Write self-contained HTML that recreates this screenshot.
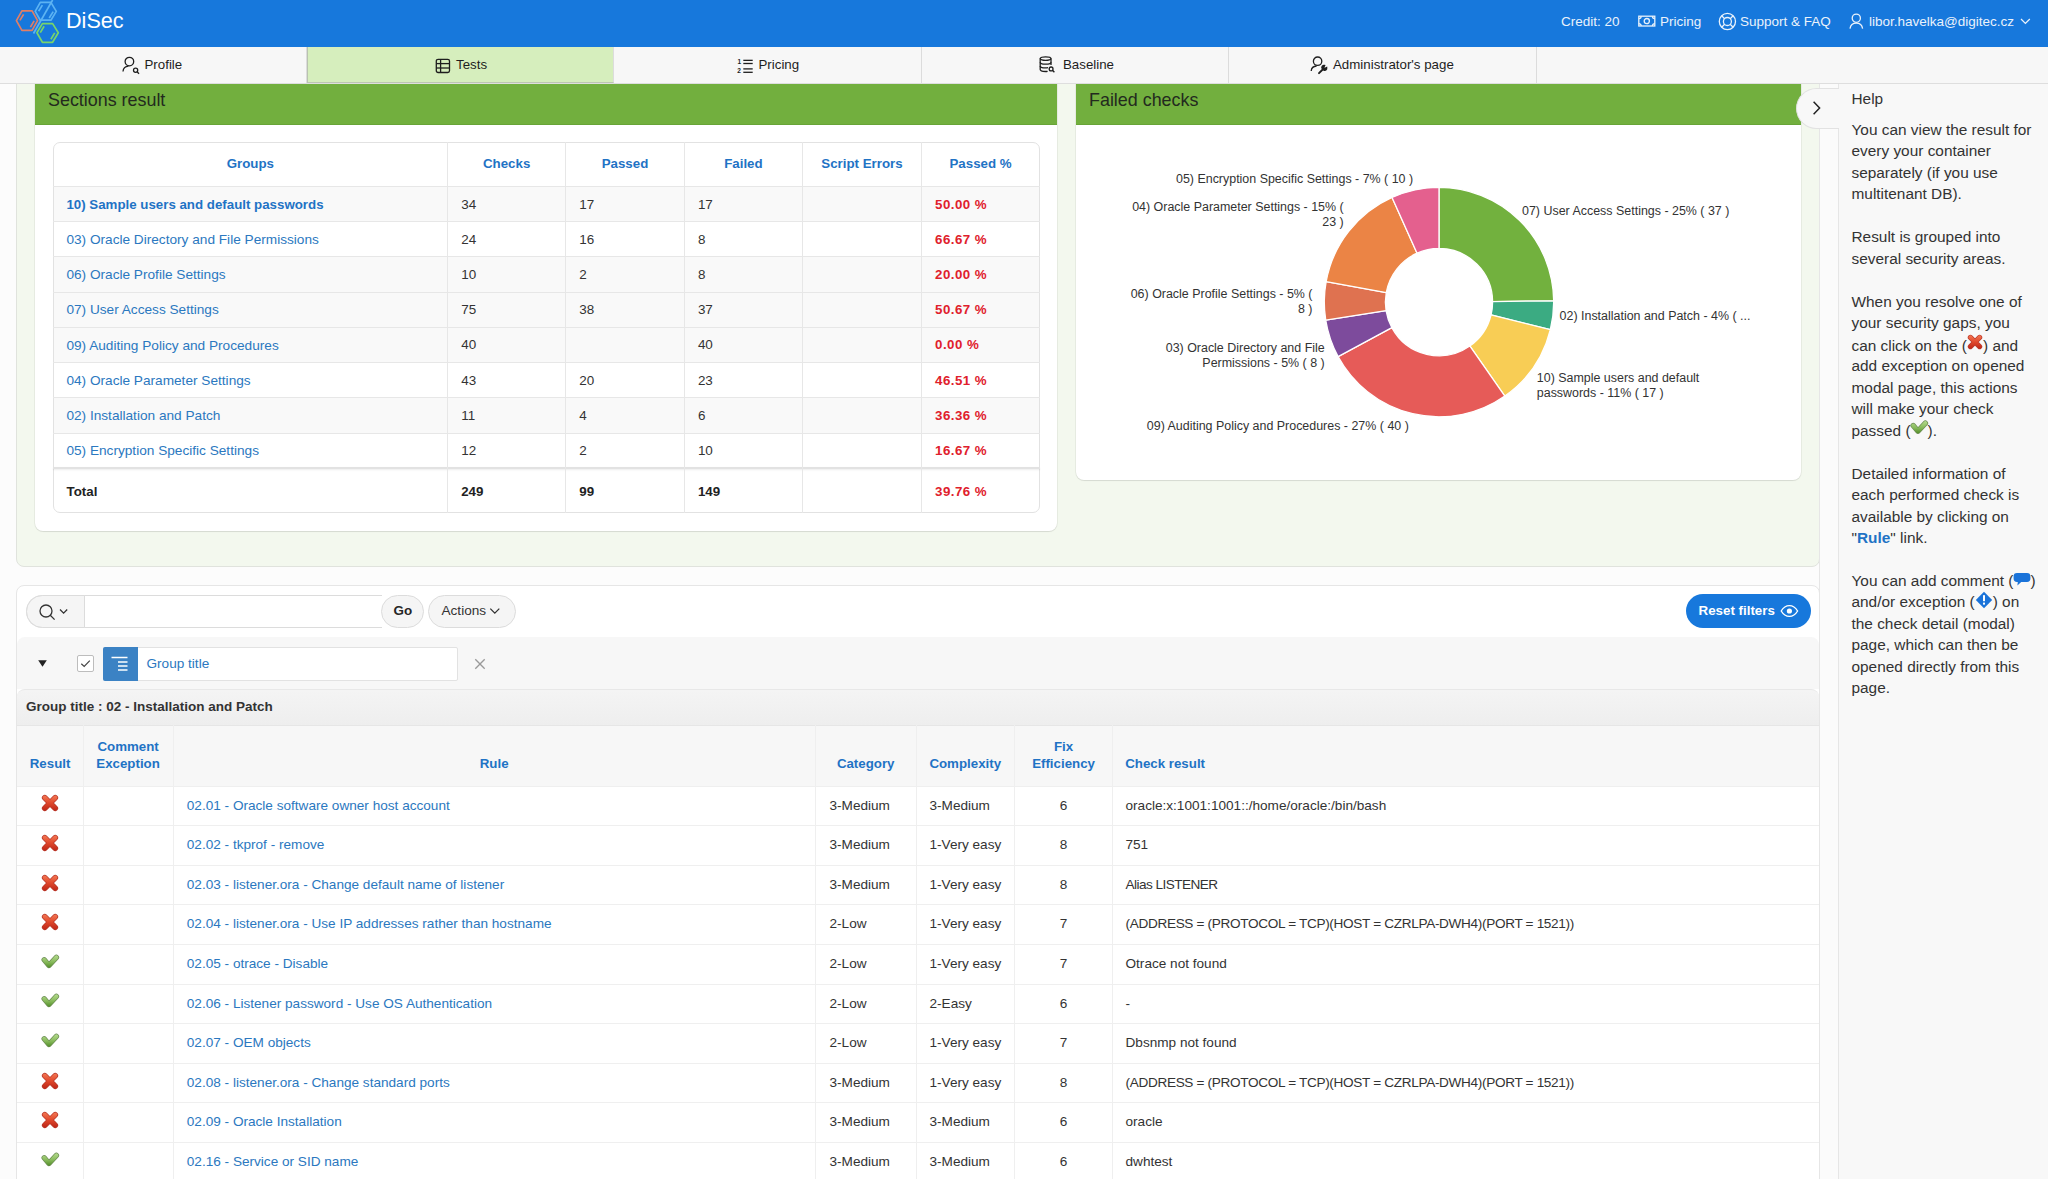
<!DOCTYPE html><html><head><meta charset="utf-8"><style>
*{box-sizing:border-box;margin:0;padding:0}
html,body{width:2048px;height:1179px;overflow:hidden;background:#fcfcfc;font-family:"Liberation Sans",sans-serif;color:#333}
.a{position:absolute}
.nw{white-space:nowrap}
#hdr{left:0;top:0;width:2048px;height:47px;background:#1778dc}
.ht{position:absolute;color:#eaf2fb;font-size:13.5px;top:14px;white-space:nowrap;line-height:16px}
#nav{left:0;top:47px;width:2048px;height:37px;background:#f7f7f7;border-bottom:1px solid #dedede}
.tab{position:absolute;top:0;height:36px;border-right:1px solid #dcdcdc}
.tt{position:absolute;top:10px;font-size:13.3px;color:#1e1e1e;white-space:nowrap;line-height:16px}
.ico{position:absolute;overflow:visible}
.gc{background:#f3f8ee;border:1px solid #e0e3dd}
.card{background:#fff;border-radius:0 0 8px 8px;box-shadow:0 1px 1px rgba(0,0,0,.08),0 0 0 1px rgba(0,0,0,.045)}
.ghd{background:#72af3e;border-bottom:1px solid #68a437}
.ghd span{position:absolute;left:13px;top:5.6px;font-size:17.9px;color:#232a1e;white-space:nowrap;line-height:20px}
.st{font-size:13.45px;line-height:16px;white-space:nowrap;position:absolute}
.lnk{color:#2b78c0}
.hb{color:#1f73c5;font-weight:bold;font-size:13.3px}
.pct{color:#e0202c;font-weight:bold;font-size:13.3px;letter-spacing:0.45px}
.vl{background:#e7e7e7;width:1px;position:absolute}
.hl{background:#e7e7e7;height:1px;position:absolute}
.lbl{position:absolute;font-size:12.45px;color:#333;white-space:nowrap;line-height:15px}
#help{left:1838px;top:84px;width:210px;height:1095px;background:#f8f8f8;border-left:1px solid #e6e6e6}
.hp{position:absolute;left:13px;font-size:15.4px;line-height:21.45px;color:#333;white-space:nowrap}
</style></head><body>
<div id="hdr" class="a">
<svg class="ico" style="left:0;top:0" width="64" height="47" viewBox="0 0 64 47"><g fill="none" stroke-width="1.7" stroke-linejoin="round">
<polygon points="16.4,20.6 21.9,10.9 32.1,10.9 37.6,20.6 32.1,30.4 21.9,30.4" stroke="#e07f66"/>
<line x1="19.9" y1="20.4" x2="23.6" y2="14.4" stroke="#e07f66"/><line x1="30.4" y1="27.1" x2="34.1" y2="20.9" stroke="#e07f66"/>
<polygon points="35.2,11.4 40.3,2.4 50.9,2.4 56.3,11.4 50.9,20.2 40.3,20.2" stroke="#5cb3f3"/>
<line x1="38.6" y1="11.2" x2="42.4" y2="5.1" stroke="#5cb3f3"/><line x1="49.2" y1="18.0" x2="53.2" y2="11.6" stroke="#5cb3f3"/>
<line x1="33.5" y1="33.5" x2="52.6" y2="0" stroke="#5cb3f3"/>
<polygon points="36.9,32.8 42.4,23.6 52.6,23.6 58.3,32.8 52.6,42.3 42.4,42.3" stroke="#78d46c"/>
<line x1="40.3" y1="32.6" x2="44.1" y2="26.3" stroke="#78d46c"/><line x1="50.9" y1="39.2" x2="54.7" y2="32.9" stroke="#78d46c"/>
</g></svg>
<div class="ht" style="left:66px;top:9px;font-size:21.6px;line-height:24px;color:#fff">DiSec</div>
<div class="ht" style="left:1561px">Credit: 20</div>
<svg class="ico" style="left:1638px;top:15px" width="18" height="12" viewBox="0 0 18 12"><g fill="none" stroke="#eaf2fb" stroke-width="1.3">
<rect x="0.8" y="1.2" width="16" height="9.8"/><circle cx="8.8" cy="6.1" r="2.6"/>
<path d="M0.8,3.6 A2.4,2.4 0 0 0 3.2,1.2 M14.4,1.2 A2.4,2.4 0 0 0 16.8,3.6 M0.8,8.6 A2.4,2.4 0 0 1 3.2,11 M14.4,11 A2.4,2.4 0 0 1 16.8,8.6"/></g></svg>
<div class="ht" style="left:1660px">Pricing</div>
<svg class="ico" style="left:1718px;top:12px" width="19" height="19" viewBox="0 0 19 19"><g fill="none" stroke="#eaf2fb" stroke-width="1.3">
<circle cx="9.4" cy="9.5" r="8.1"/><circle cx="9.4" cy="9.5" r="4"/>
<line x1="3.7" y1="3.8" x2="6.6" y2="6.7"/><line x1="15.1" y1="3.8" x2="12.2" y2="6.7"/><line x1="3.7" y1="15.2" x2="6.6" y2="12.3"/><line x1="15.1" y1="15.2" x2="12.2" y2="12.3"/></g></svg>
<div class="ht" style="left:1740px">Support &amp; FAQ</div>
<svg class="ico" style="left:1849px;top:13px" width="15" height="17" viewBox="0 0 15 17"><g fill="none" stroke="#eaf2fb" stroke-width="1.3">
<circle cx="7.3" cy="5.2" r="4.1"/><path d="M1,15.6 C1.6,11.8 4,10.2 7.3,10.2 C10.6,10.2 13,11.8 13.6,15.6"/></g></svg>
<div class="ht" style="left:1869px">libor.havelka@digitec.cz</div>
<svg class="ico" style="left:2020px;top:18px" width="11" height="7" viewBox="0 0 11 7"><path d="M1,1 L5.4,5.4 L9.8,1" fill="none" stroke="#eaf2fb" stroke-width="1.3"/></svg>
</div>
<div id="nav" class="a">
<div class="tab" style="left:0;width:307px"></div>
<div class="tab" style="left:307px;width:307px;background:#d6eebd;border-left:1px solid #b9c2b0;border-bottom:1px solid #bcc6b2;height:36px"></div>
<div class="tab" style="left:614px;width:308px"></div>
<div class="tab" style="left:922px;width:307px"></div>
<div class="tab" style="left:1229px;width:308px"></div>
<div class="tt" style="left:144.5px">Profile</div>
<div class="tt" style="left:456px">Tests</div>
<div class="tt" style="left:758.5px">Pricing</div>
<div class="tt" style="left:1063px">Baseline</div>
<div class="tt" style="left:1333px">Administrator's page</div>
<svg class="ico" style="left:121px;top:9px" width="20" height="19" viewBox="0 0 20 19"><g fill="none" stroke="#1e1e1e" stroke-width="1.3">
<circle cx="8.4" cy="5.6" r="4.3"/><path d="M2,15.5 C2.2,12.5 4.6,10.4 7.5,10.2"/><circle cx="14.6" cy="14.3" r="2.1"/><line x1="16.1" y1="15.8" x2="18" y2="17.8"/></g></svg>
<svg class="ico" style="left:435px;top:11px" width="16" height="16" viewBox="0 0 16 16"><g fill="none" stroke="#1e1e1e" stroke-width="1.3">
<rect x="1.3" y="1.3" width="13.2" height="13.2" rx="1.8"/><line x1="1.3" y1="5.6" x2="14.5" y2="5.6"/><line x1="1.3" y1="10" x2="14.5" y2="10"/><line x1="5.6" y1="1.3" x2="5.6" y2="14.5"/></g></svg>
<svg class="ico" style="left:737px;top:10px" width="18" height="17" viewBox="0 0 18 17"><g fill="none" stroke="#1e1e1e" stroke-width="1.3">
<line x1="6.3" y1="3.35" x2="15.7" y2="3.35"/><line x1="6.3" y1="6.5" x2="15.7" y2="6.5"/><line x1="6.3" y1="11.9" x2="15.7" y2="11.9"/><line x1="6.3" y1="15.3" x2="15.7" y2="15.3"/>
</g><text x="0.5" y="6.5" font-size="6.5" font-family="Liberation Sans" fill="#1e1e1e" font-weight="bold">1</text><text x="0.3" y="15.5" font-size="6.5" font-family="Liberation Sans" fill="#1e1e1e" font-weight="bold">2</text></svg>
<svg class="ico" style="left:1039px;top:9px" width="18" height="18" viewBox="0 0 18 18"><g fill="none" stroke="#1e1e1e" stroke-width="1.3">
<ellipse cx="6.6" cy="2.6" rx="5.4" ry="1.8"/><path d="M1.2,2.6 V13.6 C1.2,14.8 3.6,15.5 6.6,15.5 C7.4,15.5 8,15.4 8.6,15.3"/><path d="M12,2.6 V9"/>
<path d="M1.2,6.3 C1.2,7.5 3.6,8.2 6.6,8.2 C9.6,8.2 12,7.5 12,6.3"/><path d="M1.2,10 C1.2,11.2 3.6,11.9 6.6,11.9 C7.6,11.9 8.4,11.8 9,11.7"/>
<circle cx="12.1" cy="12.9" r="1.9"/><line x1="13.5" y1="14.3" x2="15.4" y2="16.3"/></g></svg>
<svg class="ico" style="left:1310px;top:9px" width="20" height="19" viewBox="0 0 20 19"><g fill="none" stroke="#1e1e1e" stroke-width="1.3">
<circle cx="7.6" cy="5.2" r="4.2"/><path d="M1.2,15 C1.4,12.2 3.8,10.2 6.6,10"/></g>
<path d="M9,17.2 L13.2,13 M12.2,12 C11.8,10.6 12.8,9.6 14.2,9.8 L13.4,11.6 L14.6,12.8 L16.4,12 C16.6,13.4 15.6,14.4 14.2,14" fill="none" stroke="#1e1e1e" stroke-width="1.9" stroke-linecap="round"/></svg>
</div>
<div class="a" style="left:0;top:84px;width:2048px;height:1095px;overflow:hidden"><div class="a" style="left:0;top:-84px;width:2048px;height:1179px">
<div class="a gc" style="left:16px;top:40px;width:1804px;height:527px;border-radius:8px"></div>
<div class="a card" style="left:35px;top:60px;width:1022px;height:471px"></div>
<div class="a ghd" style="left:35px;top:84px;width:1022px;height:41px"><span>Sections result</span></div>
<div class="a card" style="left:1076px;top:60px;width:725px;height:420px"></div>
<div class="a ghd" style="left:1076px;top:84px;width:725px;height:41px"><span>Failed checks</span></div>
<div class="a" style="left:53px;top:142.3px;width:987px;height:370.7px;background:#fff;border:1px solid #e2e2e2;border-radius:7px"></div>
<div class="a" style="left:54px;top:186.5px;width:985px;height:35.22px;background:#f9f9f9"></div>
<div class="a" style="left:54px;top:256.94px;width:985px;height:35.22px;background:#f9f9f9"></div>
<div class="a" style="left:54px;top:292.15999999999997px;width:985px;height:35.22px;background:#f9f9f9"></div>
<div class="a" style="left:54px;top:327.38px;width:985px;height:35.22px;background:#f9f9f9"></div>
<div class="a" style="left:54px;top:397.82px;width:985px;height:35.22px;background:#f9f9f9"></div>
<div class="hl" style="left:53px;top:186.0px;width:987px"></div>
<div class="hl" style="left:53px;top:221.22px;width:987px"></div>
<div class="hl" style="left:53px;top:256.44px;width:987px"></div>
<div class="hl" style="left:53px;top:291.65999999999997px;width:987px"></div>
<div class="hl" style="left:53px;top:326.88px;width:987px"></div>
<div class="hl" style="left:53px;top:362.1px;width:987px"></div>
<div class="hl" style="left:53px;top:397.32px;width:987px"></div>
<div class="hl" style="left:53px;top:432.53999999999996px;width:987px"></div>
<div class="a" style="left:53px;top:467.26px;width:987px;height:2px;background:#e2e2e2;box-shadow:0 1px 2px rgba(0,0,0,.08)"></div>
<div class="vl" style="left:447.1px;top:142.3px;height:370.7px"></div>
<div class="vl" style="left:565.2px;top:142.3px;height:370.7px"></div>
<div class="vl" style="left:683.8px;top:142.3px;height:370.7px"></div>
<div class="vl" style="left:802.0px;top:142.3px;height:370.7px"></div>
<div class="vl" style="left:921.0px;top:142.3px;height:370.7px"></div>
<div class="st hb" style="left:53px;width:394.6px;top:142.3px;height:44.19999999999999px;line-height:44.19999999999999px;text-align:center">Groups</div>
<div class="st hb" style="left:447.6px;width:118.10000000000002px;top:142.3px;height:44.19999999999999px;line-height:44.19999999999999px;text-align:center">Checks</div>
<div class="st hb" style="left:565.7px;width:118.59999999999991px;top:142.3px;height:44.19999999999999px;line-height:44.19999999999999px;text-align:center">Passed</div>
<div class="st hb" style="left:684.3px;width:118.20000000000005px;top:142.3px;height:44.19999999999999px;line-height:44.19999999999999px;text-align:center">Failed</div>
<div class="st hb" style="left:802.5px;width:119.0px;top:142.3px;height:44.19999999999999px;line-height:44.19999999999999px;text-align:center">Script Errors</div>
<div class="st hb" style="left:921.5px;width:118.09999999999991px;top:142.3px;height:44.19999999999999px;line-height:44.19999999999999px;text-align:center">Passed %</div>
<div class="st lnk" style="left:66.39999999999999px;top:186.8px;line-height:35.22px;font-size:13.65px;font-weight:bold;font-size:13.3px;color:#1f73c5">10) Sample users and default passwords</div>
<div class="st" style="left:461.20000000000005px;top:186.5px;line-height:35.22px">34</div>
<div class="st" style="left:579.3000000000001px;top:186.5px;line-height:35.22px">17</div>
<div class="st" style="left:697.9px;top:186.5px;line-height:35.22px">17</div>
<div class="st pct" style="left:935.1px;top:186.5px;line-height:35.22px">50.00 %</div>
<div class="st lnk" style="left:66.39999999999999px;top:222.02px;line-height:35.22px;font-size:13.65px;">03) Oracle Directory and File Permissions</div>
<div class="st" style="left:461.20000000000005px;top:221.72px;line-height:35.22px">24</div>
<div class="st" style="left:579.3000000000001px;top:221.72px;line-height:35.22px">16</div>
<div class="st" style="left:697.9px;top:221.72px;line-height:35.22px">8</div>
<div class="st pct" style="left:935.1px;top:221.72px;line-height:35.22px">66.67 %</div>
<div class="st lnk" style="left:66.39999999999999px;top:257.24px;line-height:35.22px;font-size:13.65px;">06) Oracle Profile Settings</div>
<div class="st" style="left:461.20000000000005px;top:256.94px;line-height:35.22px">10</div>
<div class="st" style="left:579.3000000000001px;top:256.94px;line-height:35.22px">2</div>
<div class="st" style="left:697.9px;top:256.94px;line-height:35.22px">8</div>
<div class="st pct" style="left:935.1px;top:256.94px;line-height:35.22px">20.00 %</div>
<div class="st lnk" style="left:66.39999999999999px;top:292.46px;line-height:35.22px;font-size:13.65px;">07) User Access Settings</div>
<div class="st" style="left:461.20000000000005px;top:292.15999999999997px;line-height:35.22px">75</div>
<div class="st" style="left:579.3000000000001px;top:292.15999999999997px;line-height:35.22px">38</div>
<div class="st" style="left:697.9px;top:292.15999999999997px;line-height:35.22px">37</div>
<div class="st pct" style="left:935.1px;top:292.15999999999997px;line-height:35.22px">50.67 %</div>
<div class="st lnk" style="left:66.39999999999999px;top:327.68px;line-height:35.22px;font-size:13.65px;">09) Auditing Policy and Procedures</div>
<div class="st" style="left:461.20000000000005px;top:327.38px;line-height:35.22px">40</div>
<div class="st" style="left:697.9px;top:327.38px;line-height:35.22px">40</div>
<div class="st pct" style="left:935.1px;top:327.38px;line-height:35.22px">0.00 %</div>
<div class="st lnk" style="left:66.39999999999999px;top:362.90000000000003px;line-height:35.22px;font-size:13.65px;">04) Oracle Parameter Settings</div>
<div class="st" style="left:461.20000000000005px;top:362.6px;line-height:35.22px">43</div>
<div class="st" style="left:579.3000000000001px;top:362.6px;line-height:35.22px">20</div>
<div class="st" style="left:697.9px;top:362.6px;line-height:35.22px">23</div>
<div class="st pct" style="left:935.1px;top:362.6px;line-height:35.22px">46.51 %</div>
<div class="st lnk" style="left:66.39999999999999px;top:398.12px;line-height:35.22px;font-size:13.65px;">02) Installation and Patch</div>
<div class="st" style="left:461.20000000000005px;top:397.82px;line-height:35.22px">11</div>
<div class="st" style="left:579.3000000000001px;top:397.82px;line-height:35.22px">4</div>
<div class="st" style="left:697.9px;top:397.82px;line-height:35.22px">6</div>
<div class="st pct" style="left:935.1px;top:397.82px;line-height:35.22px">36.36 %</div>
<div class="st lnk" style="left:66.39999999999999px;top:433.34px;line-height:35.22px;font-size:13.65px;">05) Encryption Specific Settings</div>
<div class="st" style="left:461.20000000000005px;top:433.03999999999996px;line-height:35.22px">12</div>
<div class="st" style="left:579.3000000000001px;top:433.03999999999996px;line-height:35.22px">2</div>
<div class="st" style="left:697.9px;top:433.03999999999996px;line-height:35.22px">10</div>
<div class="st pct" style="left:935.1px;top:433.03999999999996px;line-height:35.22px">16.67 %</div>
<div class="st " style="left:66.6px;top:470.06px;line-height:44.74000000000001px;color:#222;font-weight:bold;font-size:13.3px">Total</div>
<div class="st " style="left:461.20000000000005px;top:470.06px;line-height:44.74000000000001px;color:#222;font-weight:bold;font-size:13.3px">249</div>
<div class="st " style="left:579.3000000000001px;top:470.06px;line-height:44.74000000000001px;color:#222;font-weight:bold;font-size:13.3px">99</div>
<div class="st " style="left:697.9px;top:470.06px;line-height:44.74000000000001px;color:#222;font-weight:bold;font-size:13.3px">149</div>
<div class="st pct" style="left:935.1px;top:470.06px;line-height:44.74000000000001px;">39.76 %</div>
<svg class="a" style="left:0;top:0" width="2048" height="1179" viewBox="0 0 2048 1179"><path d="M1439.00,187.40 A114.7,114.7 0 0 1 1553.69,300.89 L1492.60,301.53 A53.6,53.6 0 0 0 1439.00,248.50 Z" fill="#72b13e" stroke="#fff" stroke-width="1.3" stroke-linejoin="round"/><path d="M1553.69,300.89 A114.7,114.7 0 0 1 1550.34,329.64 L1491.03,314.97 A53.6,53.6 0 0 0 1492.60,301.53 Z" fill="#3bab82" stroke="#fff" stroke-width="1.3" stroke-linejoin="round"/><path d="M1550.34,329.64 A114.7,114.7 0 0 1 1504.84,396.02 L1469.77,345.99 A53.6,53.6 0 0 0 1491.03,314.97 Z" fill="#f8cd55" stroke="#fff" stroke-width="1.3" stroke-linejoin="round"/><path d="M1504.84,396.02 A114.7,114.7 0 0 1 1338.09,356.64 L1391.85,327.58 A53.6,53.6 0 0 0 1469.77,345.99 Z" fill="#e65b58" stroke="#fff" stroke-width="1.3" stroke-linejoin="round"/><path d="M1338.09,356.64 A114.7,114.7 0 0 1 1325.73,320.16 L1386.07,310.54 A53.6,53.6 0 0 0 1391.85,327.58 Z" fill="#7d4b9c" stroke="#fff" stroke-width="1.3" stroke-linejoin="round"/><path d="M1325.73,320.16 A114.7,114.7 0 0 1 1326.14,281.65 L1386.26,292.55 A53.6,53.6 0 0 0 1386.07,310.54 Z" fill="#df7250" stroke="#fff" stroke-width="1.3" stroke-linejoin="round"/><path d="M1326.14,281.65 A114.7,114.7 0 0 1 1392.05,197.45 L1417.06,253.20 A53.6,53.6 0 0 0 1386.26,292.55 Z" fill="#eb8445" stroke="#fff" stroke-width="1.3" stroke-linejoin="round"/><path d="M1392.05,197.45 A114.7,114.7 0 0 1 1439.00,187.40 L1439.00,248.50 A53.6,53.6 0 0 0 1417.06,253.20 Z" fill="#e4608e" stroke="#fff" stroke-width="1.3" stroke-linejoin="round"/></svg>
<div class="lbl" style="left:1176px;top:172.3px">05) Encryption Specific Settings - 7% ( 10 )</div>
<div class="lbl" style="right:704.3px;top:200.1px;text-align:right">04) Oracle Parameter Settings - 15% (</div>
<div class="lbl" style="right:704.3px;top:214.8px;text-align:right">23 )</div>
<div class="lbl" style="left:1522px;top:203.9px">07) User Access Settings - 25% ( 37 )</div>
<div class="lbl" style="right:735.5px;top:286.9px;text-align:right">06) Oracle Profile Settings - 5% (</div>
<div class="lbl" style="right:735.5px;top:301.7px;text-align:right">8 )</div>
<div class="lbl" style="left:1559.6px;top:309.4px">02) Installation and Patch - 4% ( ...</div>
<div class="lbl" style="right:723.3px;top:341.3px;text-align:right">03) Oracle Directory and File</div>
<div class="lbl" style="right:723.3px;top:356.2px;text-align:right">Permissions - 5% ( 8 )</div>
<div class="lbl" style="left:1536.8px;top:370.7px">10) Sample users and default</div>
<div class="lbl" style="left:1536.8px;top:385.5px">passwords - 11% ( 17 )</div>
<div class="lbl" style="left:1146.8px;top:419.0px">09) Auditing Policy and Procedures - 27% ( 40 )</div>
<div class="a" style="left:16px;top:585px;width:1804px;height:700px;background:#fff;border:1px solid #e6e6e6;border-radius:8px"></div>
<div class="a" style="left:26px;top:594.5px;width:356px;height:33.6px;border:1px solid #dcdcdc;border-right:none;border-radius:17px 0 0 17px;background:#fff"></div>
<div class="a" style="left:26px;top:594.5px;width:59px;height:33.6px;border:1px solid #dcdcdc;border-radius:17px 0 0 17px;background:#f5f5f5"></div>
<svg class="ico" style="left:37px;top:603px" width="34" height="18" viewBox="0 0 34 18"><g fill="none" stroke="#333" stroke-width="1.3">
<circle cx="9" cy="8" r="6"/><line x1="13.3" y1="12.3" x2="17.6" y2="16.6"/><path d="M23,6.5 L26.6,10.1 L30.2,6.5"/></g></svg>
<div class="a" style="left:381px;top:594.5px;width:42.6px;height:33.6px;border:1px solid #dcdcdc;border-radius:17px;background:#f5f5f5"></div>
<div class="st" style="left:393.5px;top:595px;line-height:32px;font-weight:bold;font-size:13.4px;color:#262626">Go</div>
<div class="a" style="left:428px;top:594.5px;width:88px;height:33.6px;border:1px solid #dcdcdc;border-radius:17px;background:#f5f5f5"></div>
<div class="st" style="left:441.5px;top:595px;line-height:32px;font-size:13.6px;color:#333">Actions</div>
<svg class="ico" style="left:489px;top:607px" width="12" height="8" viewBox="0 0 12 8"><path d="M1.3,1.6 L5.8,6.1 L10.3,1.6" fill="none" stroke="#333" stroke-width="1.3"/></svg>
<div class="a" style="left:1686px;top:594px;width:125px;height:34.4px;border-radius:17.2px;background:#1778dc"></div>
<div class="st" style="left:1698.5px;top:595px;line-height:32px;font-weight:bold;font-size:13.35px;color:#fff">Reset filters</div>
<svg class="ico" style="left:1780px;top:603px" width="19" height="16" viewBox="0 0 19 16"><g fill="none" stroke="#fff" stroke-width="1.4">
<path d="M1.2,8 C3.4,4.3 6.2,2.6 9.4,2.6 C12.6,2.6 15.4,4.3 17.6,8 C15.4,11.7 12.6,13.4 9.4,13.4 C6.2,13.4 3.4,11.7 1.2,8 Z"/></g><circle cx="9.4" cy="8" r="2.6" fill="#fff"/></svg>
<div class="a" style="left:17px;top:637px;width:1802px;height:52px;background:#f7f7f7;border-radius:8px 8px 0 0"></div>
<svg class="ico" style="left:37px;top:659px" width="11" height="9" viewBox="0 0 11 9"><path d="M1.2,1.2 L9.8,1.2 L5.5,7.8 Z" fill="#222"/></svg>
<div class="a" style="left:77px;top:655px;width:17px;height:17px;border:1px solid #bdbdbd;border-radius:2px;background:#fff"></div>
<svg class="ico" style="left:77px;top:655px" width="17" height="17" viewBox="0 0 17 17"><path d="M4.3,8.8 L7.2,11.5 L12.8,5.6" fill="none" stroke="#444" stroke-width="1.2"/></svg>
<div class="a" style="left:102.5px;top:647px;width:355px;height:34px;border:1px solid #e2e2e2;background:#fff;border-radius:2px"></div>
<div class="a" style="left:102.5px;top:647px;width:35.5px;height:34px;background:#3b82c4;border-radius:2px 0 0 2px"></div>
<svg class="ico" style="left:110px;top:654px" width="20" height="20" viewBox="0 0 20 20"><g stroke="#fff" stroke-width="1.5">
<line x1="1.5" y1="3.5" x2="17.5" y2="3.5"/><line x1="8" y1="8" x2="17.5" y2="8"/><line x1="8" y1="12" x2="17.5" y2="12"/><line x1="8" y1="16" x2="17.5" y2="16"/></g></svg>
<div class="st" style="left:146.5px;top:647px;line-height:34px;font-size:13.6px;color:#2b78c0">Group title</div>
<svg class="ico" style="left:474px;top:658px" width="12" height="12" viewBox="0 0 12 12"><g stroke="#9a9a9a" stroke-width="1.3"><line x1="1.3" y1="1.3" x2="10.7" y2="10.7"/><line x1="10.7" y1="1.3" x2="1.3" y2="10.7"/></g></svg>
<div class="a" style="left:17px;top:689px;width:1802px;height:36px;background:linear-gradient(#f4f4f4,#eeeeee);border-top:1px solid #e8e8e8;border-radius:8px 8px 0 0"></div>
<div class="st" style="left:26px;top:689px;line-height:36px;font-weight:bold;font-size:13.5px;color:#333">Group title : 02 - Installation and Patch</div>
<div class="a" style="left:17px;top:725px;width:1802px;height:61.10000000000002px;background:#f7f7f7;border-top:1px solid #e6e6e6"></div>
<div class="vl" style="left:82.7px;top:725px;height:500px;background:#efefef"></div>
<div class="vl" style="left:172.5px;top:725px;height:500px;background:#efefef"></div>
<div class="vl" style="left:814.8px;top:725px;height:500px;background:#efefef"></div>
<div class="vl" style="left:915.6px;top:725px;height:500px;background:#efefef"></div>
<div class="vl" style="left:1013.9px;top:725px;height:500px;background:#efefef"></div>
<div class="vl" style="left:1112.2px;top:725px;height:500px;background:#efefef"></div>
<div class="hl" style="left:17px;top:785.6px;width:1802px;background:#efefef"></div>
<div class="hl" style="left:17px;top:825.2px;width:1802px;background:#efefef"></div>
<div class="hl" style="left:17px;top:864.8000000000001px;width:1802px;background:#efefef"></div>
<div class="hl" style="left:17px;top:904.4000000000001px;width:1802px;background:#efefef"></div>
<div class="hl" style="left:17px;top:944.0px;width:1802px;background:#efefef"></div>
<div class="hl" style="left:17px;top:983.6px;width:1802px;background:#efefef"></div>
<div class="hl" style="left:17px;top:1023.2px;width:1802px;background:#efefef"></div>
<div class="hl" style="left:17px;top:1062.8px;width:1802px;background:#efefef"></div>
<div class="hl" style="left:17px;top:1102.4px;width:1802px;background:#efefef"></div>
<div class="hl" style="left:17px;top:1142.0px;width:1802px;background:#efefef"></div>
<div class="hl" style="left:17px;top:1181.6px;width:1802px;background:#efefef"></div>
<div class="st hb" style="left:17px;width:66.2px;top:725px;height:61.10000000000002px;display:flex;align-items:flex-end;justify-content:center;padding:0 0 13.8px 0px;line-height:17px;text-align:center;white-space:normal">Result</div>
<div class="st hb" style="left:83.2px;width:89.8px;top:725px;height:61.10000000000002px;display:flex;align-items:flex-end;justify-content:center;padding:0 0 13.8px 0px;line-height:17px;text-align:center;white-space:normal">Comment<br>Exception</div>
<div class="st hb" style="left:173px;width:642.3px;top:725px;height:61.10000000000002px;display:flex;align-items:flex-end;justify-content:center;padding:0 0 13.8px 0px;line-height:17px;text-align:center;white-space:normal">Rule</div>
<div class="st hb" style="left:815.3px;width:100.80000000000007px;top:725px;height:61.10000000000002px;display:flex;align-items:flex-end;justify-content:center;padding:0 0 13.8px 0px;line-height:17px;text-align:center;white-space:normal">Category</div>
<div class="st hb" style="left:916.1px;width:98.29999999999995px;top:725px;height:61.10000000000002px;display:flex;align-items:flex-end;justify-content:center;padding:0 0 13.8px 0px;line-height:17px;text-align:center;white-space:normal">Complexity</div>
<div class="st hb" style="left:1014.4px;width:98.30000000000007px;top:725px;height:61.10000000000002px;display:flex;align-items:flex-end;justify-content:center;padding:0 0 13.8px 0px;line-height:17px;text-align:center;white-space:normal">Fix<br>Efficiency</div>
<div class="st hb" style="left:1112.7px;width:706.3px;top:725px;height:61.10000000000002px;display:flex;align-items:flex-end;justify-content:flex-start;padding:0 0 13.8px 12.5px;line-height:17px;text-align:left;white-space:normal">Check result</div>
<svg class="ico" style="left:41.15px;top:794.3000000000001px" width="18" height="18" viewBox="0 0 18 18"><defs><linearGradient id="gx0" gradientUnits="userSpaceOnUse" x1="0" y1="1" x2="0" y2="17"><stop offset="0" stop-color="#f47a55"/><stop offset="0.5" stop-color="#e0482c"/><stop offset="1" stop-color="#bb2416"/></linearGradient></defs>
<g stroke-linecap="round"><path d="M3.8,3.8 L14.2,14.2 M14.2,3.8 L3.8,14.2" stroke="#b8382a" stroke-width="5.8"/><path d="M3.8,3.8 L14.2,14.2 M14.2,3.8 L3.8,14.2" stroke="url(#gx0)" stroke-width="4.4"/></g></svg>
<div class="st lnk" style="left:186.8px;top:785.5px;line-height:39.6px;font-size:13.6px">02.01 - Oracle software owner host account</div>
<div class="st" style="left:829.5px;top:785.5px;line-height:39.6px;font-size:13.6px">3-Medium</div>
<div class="st" style="left:929.5px;top:785.5px;line-height:39.6px;font-size:13.6px">3-Medium</div>
<div class="st" style="left:1014.4px;width:98.3px;text-align:center;top:785.5px;line-height:39.6px;font-size:13.6px">6</div>
<div class="st" style="left:1125.5px;top:785.5px;line-height:39.6px;font-size:13.6px;letter-spacing:0">oracle:x:1001:1001::/home/oracle:/bin/bash</div>
<svg class="ico" style="left:41.15px;top:833.9000000000001px" width="18" height="18" viewBox="0 0 18 18"><defs><linearGradient id="gx1" gradientUnits="userSpaceOnUse" x1="0" y1="1" x2="0" y2="17"><stop offset="0" stop-color="#f47a55"/><stop offset="0.5" stop-color="#e0482c"/><stop offset="1" stop-color="#bb2416"/></linearGradient></defs>
<g stroke-linecap="round"><path d="M3.8,3.8 L14.2,14.2 M14.2,3.8 L3.8,14.2" stroke="#b8382a" stroke-width="5.8"/><path d="M3.8,3.8 L14.2,14.2 M14.2,3.8 L3.8,14.2" stroke="url(#gx1)" stroke-width="4.4"/></g></svg>
<div class="st lnk" style="left:186.8px;top:825.1px;line-height:39.6px;font-size:13.6px">02.02 - tkprof - remove</div>
<div class="st" style="left:829.5px;top:825.1px;line-height:39.6px;font-size:13.6px">3-Medium</div>
<div class="st" style="left:929.5px;top:825.1px;line-height:39.6px;font-size:13.6px">1-Very easy</div>
<div class="st" style="left:1014.4px;width:98.3px;text-align:center;top:825.1px;line-height:39.6px;font-size:13.6px">8</div>
<div class="st" style="left:1125.5px;top:825.1px;line-height:39.6px;font-size:13.6px;letter-spacing:0">751</div>
<svg class="ico" style="left:41.15px;top:873.5000000000001px" width="18" height="18" viewBox="0 0 18 18"><defs><linearGradient id="gx2" gradientUnits="userSpaceOnUse" x1="0" y1="1" x2="0" y2="17"><stop offset="0" stop-color="#f47a55"/><stop offset="0.5" stop-color="#e0482c"/><stop offset="1" stop-color="#bb2416"/></linearGradient></defs>
<g stroke-linecap="round"><path d="M3.8,3.8 L14.2,14.2 M14.2,3.8 L3.8,14.2" stroke="#b8382a" stroke-width="5.8"/><path d="M3.8,3.8 L14.2,14.2 M14.2,3.8 L3.8,14.2" stroke="url(#gx2)" stroke-width="4.4"/></g></svg>
<div class="st lnk" style="left:186.8px;top:864.7px;line-height:39.6px;font-size:13.6px">02.03 - listener.ora - Change default name of listener</div>
<div class="st" style="left:829.5px;top:864.7px;line-height:39.6px;font-size:13.6px">3-Medium</div>
<div class="st" style="left:929.5px;top:864.7px;line-height:39.6px;font-size:13.6px">1-Very easy</div>
<div class="st" style="left:1014.4px;width:98.3px;text-align:center;top:864.7px;line-height:39.6px;font-size:13.6px">8</div>
<div class="st" style="left:1125.5px;top:864.7px;line-height:39.6px;font-size:13.6px;letter-spacing:-0.55px">Alias LISTENER</div>
<svg class="ico" style="left:41.15px;top:913.1000000000001px" width="18" height="18" viewBox="0 0 18 18"><defs><linearGradient id="gx3" gradientUnits="userSpaceOnUse" x1="0" y1="1" x2="0" y2="17"><stop offset="0" stop-color="#f47a55"/><stop offset="0.5" stop-color="#e0482c"/><stop offset="1" stop-color="#bb2416"/></linearGradient></defs>
<g stroke-linecap="round"><path d="M3.8,3.8 L14.2,14.2 M14.2,3.8 L3.8,14.2" stroke="#b8382a" stroke-width="5.8"/><path d="M3.8,3.8 L14.2,14.2 M14.2,3.8 L3.8,14.2" stroke="url(#gx3)" stroke-width="4.4"/></g></svg>
<div class="st lnk" style="left:186.8px;top:904.3000000000001px;line-height:39.6px;font-size:13.6px">02.04 - listener.ora - Use IP addresses rather than hostname</div>
<div class="st" style="left:829.5px;top:904.3000000000001px;line-height:39.6px;font-size:13.6px">2-Low</div>
<div class="st" style="left:929.5px;top:904.3000000000001px;line-height:39.6px;font-size:13.6px">1-Very easy</div>
<div class="st" style="left:1014.4px;width:98.3px;text-align:center;top:904.3000000000001px;line-height:39.6px;font-size:13.6px">7</div>
<div class="st" style="left:1125.5px;top:904.3000000000001px;line-height:39.6px;font-size:13.6px;letter-spacing:-0.33px">(ADDRESS = (PROTOCOL = TCP)(HOST = CZRLPA-DWH4)(PORT = 1521))</div>
<svg class="ico" style="left:40px;top:951.7px" width="20" height="18" viewBox="0 0 20 18"><defs><linearGradient id="gv4" gradientUnits="userSpaceOnUse" x1="0" y1="3" x2="0" y2="16"><stop offset="0" stop-color="#b6dc8e"/><stop offset="0.55" stop-color="#86b95a"/><stop offset="1" stop-color="#4f8a26"/></linearGradient></defs>
<g fill="none" stroke-linecap="round" stroke-linejoin="round"><path d="M4.2,7.8 L9,13.4 L16.4,5.4" stroke="#6d8d55" stroke-width="5.4"/><path d="M4.2,7.8 L9,13.4 L16.4,5.4" stroke="url(#gv4)" stroke-width="4.0"/></g></svg>
<div class="st lnk" style="left:186.8px;top:943.9px;line-height:39.6px;font-size:13.6px">02.05 - otrace - Disable</div>
<div class="st" style="left:829.5px;top:943.9px;line-height:39.6px;font-size:13.6px">2-Low</div>
<div class="st" style="left:929.5px;top:943.9px;line-height:39.6px;font-size:13.6px">1-Very easy</div>
<div class="st" style="left:1014.4px;width:98.3px;text-align:center;top:943.9px;line-height:39.6px;font-size:13.6px">7</div>
<div class="st" style="left:1125.5px;top:943.9px;line-height:39.6px;font-size:13.6px;letter-spacing:0">Otrace not found</div>
<svg class="ico" style="left:40px;top:991.3000000000001px" width="20" height="18" viewBox="0 0 20 18"><defs><linearGradient id="gv5" gradientUnits="userSpaceOnUse" x1="0" y1="3" x2="0" y2="16"><stop offset="0" stop-color="#b6dc8e"/><stop offset="0.55" stop-color="#86b95a"/><stop offset="1" stop-color="#4f8a26"/></linearGradient></defs>
<g fill="none" stroke-linecap="round" stroke-linejoin="round"><path d="M4.2,7.8 L9,13.4 L16.4,5.4" stroke="#6d8d55" stroke-width="5.4"/><path d="M4.2,7.8 L9,13.4 L16.4,5.4" stroke="url(#gv5)" stroke-width="4.0"/></g></svg>
<div class="st lnk" style="left:186.8px;top:983.5px;line-height:39.6px;font-size:13.6px">02.06 - Listener password - Use OS Authentication</div>
<div class="st" style="left:829.5px;top:983.5px;line-height:39.6px;font-size:13.6px">2-Low</div>
<div class="st" style="left:929.5px;top:983.5px;line-height:39.6px;font-size:13.6px">2-Easy</div>
<div class="st" style="left:1014.4px;width:98.3px;text-align:center;top:983.5px;line-height:39.6px;font-size:13.6px">6</div>
<div class="st" style="left:1125.5px;top:983.5px;line-height:39.6px;font-size:13.6px;letter-spacing:0">-</div>
<svg class="ico" style="left:40px;top:1030.9px" width="20" height="18" viewBox="0 0 20 18"><defs><linearGradient id="gv6" gradientUnits="userSpaceOnUse" x1="0" y1="3" x2="0" y2="16"><stop offset="0" stop-color="#b6dc8e"/><stop offset="0.55" stop-color="#86b95a"/><stop offset="1" stop-color="#4f8a26"/></linearGradient></defs>
<g fill="none" stroke-linecap="round" stroke-linejoin="round"><path d="M4.2,7.8 L9,13.4 L16.4,5.4" stroke="#6d8d55" stroke-width="5.4"/><path d="M4.2,7.8 L9,13.4 L16.4,5.4" stroke="url(#gv6)" stroke-width="4.0"/></g></svg>
<div class="st lnk" style="left:186.8px;top:1023.1px;line-height:39.6px;font-size:13.6px">02.07 - OEM objects</div>
<div class="st" style="left:829.5px;top:1023.1px;line-height:39.6px;font-size:13.6px">2-Low</div>
<div class="st" style="left:929.5px;top:1023.1px;line-height:39.6px;font-size:13.6px">1-Very easy</div>
<div class="st" style="left:1014.4px;width:98.3px;text-align:center;top:1023.1px;line-height:39.6px;font-size:13.6px">7</div>
<div class="st" style="left:1125.5px;top:1023.1px;line-height:39.6px;font-size:13.6px;letter-spacing:0">Dbsnmp not found</div>
<svg class="ico" style="left:41.15px;top:1071.5px" width="18" height="18" viewBox="0 0 18 18"><defs><linearGradient id="gx7" gradientUnits="userSpaceOnUse" x1="0" y1="1" x2="0" y2="17"><stop offset="0" stop-color="#f47a55"/><stop offset="0.5" stop-color="#e0482c"/><stop offset="1" stop-color="#bb2416"/></linearGradient></defs>
<g stroke-linecap="round"><path d="M3.8,3.8 L14.2,14.2 M14.2,3.8 L3.8,14.2" stroke="#b8382a" stroke-width="5.8"/><path d="M3.8,3.8 L14.2,14.2 M14.2,3.8 L3.8,14.2" stroke="url(#gx7)" stroke-width="4.4"/></g></svg>
<div class="st lnk" style="left:186.8px;top:1062.7px;line-height:39.6px;font-size:13.6px">02.08 - listener.ora - Change standard ports</div>
<div class="st" style="left:829.5px;top:1062.7px;line-height:39.6px;font-size:13.6px">3-Medium</div>
<div class="st" style="left:929.5px;top:1062.7px;line-height:39.6px;font-size:13.6px">1-Very easy</div>
<div class="st" style="left:1014.4px;width:98.3px;text-align:center;top:1062.7px;line-height:39.6px;font-size:13.6px">8</div>
<div class="st" style="left:1125.5px;top:1062.7px;line-height:39.6px;font-size:13.6px;letter-spacing:-0.33px">(ADDRESS = (PROTOCOL = TCP)(HOST = CZRLPA-DWH4)(PORT = 1521))</div>
<svg class="ico" style="left:41.15px;top:1111.1000000000001px" width="18" height="18" viewBox="0 0 18 18"><defs><linearGradient id="gx8" gradientUnits="userSpaceOnUse" x1="0" y1="1" x2="0" y2="17"><stop offset="0" stop-color="#f47a55"/><stop offset="0.5" stop-color="#e0482c"/><stop offset="1" stop-color="#bb2416"/></linearGradient></defs>
<g stroke-linecap="round"><path d="M3.8,3.8 L14.2,14.2 M14.2,3.8 L3.8,14.2" stroke="#b8382a" stroke-width="5.8"/><path d="M3.8,3.8 L14.2,14.2 M14.2,3.8 L3.8,14.2" stroke="url(#gx8)" stroke-width="4.4"/></g></svg>
<div class="st lnk" style="left:186.8px;top:1102.3000000000002px;line-height:39.6px;font-size:13.6px">02.09 - Oracle Installation</div>
<div class="st" style="left:829.5px;top:1102.3000000000002px;line-height:39.6px;font-size:13.6px">3-Medium</div>
<div class="st" style="left:929.5px;top:1102.3000000000002px;line-height:39.6px;font-size:13.6px">3-Medium</div>
<div class="st" style="left:1014.4px;width:98.3px;text-align:center;top:1102.3000000000002px;line-height:39.6px;font-size:13.6px">6</div>
<div class="st" style="left:1125.5px;top:1102.3000000000002px;line-height:39.6px;font-size:13.6px;letter-spacing:0">oracle</div>
<svg class="ico" style="left:40px;top:1149.7px" width="20" height="18" viewBox="0 0 20 18"><defs><linearGradient id="gv9" gradientUnits="userSpaceOnUse" x1="0" y1="3" x2="0" y2="16"><stop offset="0" stop-color="#b6dc8e"/><stop offset="0.55" stop-color="#86b95a"/><stop offset="1" stop-color="#4f8a26"/></linearGradient></defs>
<g fill="none" stroke-linecap="round" stroke-linejoin="round"><path d="M4.2,7.8 L9,13.4 L16.4,5.4" stroke="#6d8d55" stroke-width="5.4"/><path d="M4.2,7.8 L9,13.4 L16.4,5.4" stroke="url(#gv9)" stroke-width="4.0"/></g></svg>
<div class="st lnk" style="left:186.8px;top:1141.9px;line-height:39.6px;font-size:13.6px">02.16 - Service or SID name</div>
<div class="st" style="left:829.5px;top:1141.9px;line-height:39.6px;font-size:13.6px">3-Medium</div>
<div class="st" style="left:929.5px;top:1141.9px;line-height:39.6px;font-size:13.6px">3-Medium</div>
<div class="st" style="left:1014.4px;width:98.3px;text-align:center;top:1141.9px;line-height:39.6px;font-size:13.6px">6</div>
<div class="st" style="left:1125.5px;top:1141.9px;line-height:39.6px;font-size:13.6px;letter-spacing:0">dwhtest</div>
<div class="a" style="left:1819px;top:84px;width:19px;height:1095px;background:#fbfbfb;border-left:1px solid #e6e6e6"></div>
<div id="help" class="a"></div>
<div class="a" style="left:1796px;top:87.5px;width:43px;height:41px;background:#f8f8f8;border:1px solid #e2e2e2;border-right:none;border-radius:20.5px 0 0 20.5px"></div>
<svg class="ico" style="left:1811px;top:100px" width="11" height="16" viewBox="0 0 11 16"><path d="M2.6,1.8 L8.6,8 L2.6,14.2" fill="none" stroke="#222" stroke-width="1.5"/></svg>
<div class="hp" style="left:1851.5px;top:88px">Help</div>
<div class="hp" style="left:1851.5px;top:118.7px">You can view the result for</div>
<div class="hp" style="left:1851.5px;top:140.19px">every your container</div>
<div class="hp" style="left:1851.5px;top:161.68px">separately (if you use</div>
<div class="hp" style="left:1851.5px;top:183.17000000000002px">multitenant DB).</div>
<div class="hp" style="left:1851.5px;top:226.14999999999998px">Result is grouped into</div>
<div class="hp" style="left:1851.5px;top:247.64px">several security areas.</div>
<div class="hp" style="left:1851.5px;top:290.62px">When you resolve one of</div>
<div class="hp" style="left:1851.5px;top:312.11px">your security gaps, you</div>
<div class="hp" style="left:1851.5px;top:333.59999999999997px">can click on the (<svg width="16" height="16" viewBox="0 0 18 18" style="vertical-align:1px"><defs><linearGradient id="hx" gradientUnits="userSpaceOnUse" x1="0" y1="1" x2="0" y2="17"><stop offset="0" stop-color="#f47a55"/><stop offset="0.5" stop-color="#e0482c"/><stop offset="1" stop-color="#bb2416"/></linearGradient></defs><g stroke-linecap="round"><path d="M3.8,3.8 L14.2,14.2 M14.2,3.8 L3.8,14.2" stroke="#b8382a" stroke-width="5.8"/><path d="M3.8,3.8 L14.2,14.2 M14.2,3.8 L3.8,14.2" stroke="url(#hx)" stroke-width="4.4"/></g></svg>) and</div>
<div class="hp" style="left:1851.5px;top:355.09px">add exception on opened</div>
<div class="hp" style="left:1851.5px;top:376.58px">modal page, this actions</div>
<div class="hp" style="left:1851.5px;top:398.07px">will make your check</div>
<div class="hp" style="left:1851.5px;top:419.55999999999995px">passed (<svg width="19" height="15" viewBox="1 2.2 19 15" style="vertical-align:1.2px;margin:0 -1px"><defs><linearGradient id="hv" gradientUnits="userSpaceOnUse" x1="0" y1="3" x2="0" y2="16"><stop offset="0" stop-color="#b6dc8e"/><stop offset="0.55" stop-color="#86b95a"/><stop offset="1" stop-color="#4f8a26"/></linearGradient></defs><g fill="none" stroke-linecap="round" stroke-linejoin="round"><path d="M4.2,7.8 L9,13.4 L16.4,5.4" stroke="#6d8d55" stroke-width="5.4"/><path d="M4.2,7.8 L9,13.4 L16.4,5.4" stroke="url(#hv)" stroke-width="4.0"/></g></svg>).</div>
<div class="hp" style="left:1851.5px;top:462.53999999999996px">Detailed information of</div>
<div class="hp" style="left:1851.5px;top:484.03px">each performed check is</div>
<div class="hp" style="left:1851.5px;top:505.52px">available by clicking on</div>
<div class="hp" style="left:1851.5px;top:527.01px">&quot;<b style="color:#1f73c5">Rule</b>&quot; link.</div>
<div class="hp" style="left:1851.5px;top:569.99px">You can add comment (<svg width="18" height="15" viewBox="0 0 18 15" style="vertical-align:-1px;margin:0 -0.5px"><path d="M4,1 H14 A3.4,3.4 0 0 1 17.4,4.4 V6.6 A3.4,3.4 0 0 1 14,10 H8.2 L4.4,13.6 L4.8,10 H4 A3.4,3.4 0 0 1 0.6,6.6 V4.4 A3.4,3.4 0 0 1 4,1 Z" fill="#1a73d9"/></svg>)</div>
<div class="hp" style="left:1851.5px;top:591.48px">and/or exception (<svg width="18" height="18" viewBox="0 0 18 18" style="vertical-align:-2px"><path d="M9,0.8 L17.2,9 L9,17.2 L0.8,9 Z" fill="#1a73d9"/><rect x="8" y="4.2" width="2" height="6" fill="#fff"/><rect x="8" y="11.6" width="2" height="2" fill="#fff"/></svg>) on</div>
<div class="hp" style="left:1851.5px;top:612.97px">the check detail (modal)</div>
<div class="hp" style="left:1851.5px;top:634.46px">page, which can then be</div>
<div class="hp" style="left:1851.5px;top:655.95px">opened directly from this</div>
<div class="hp" style="left:1851.5px;top:677.44px">page.</div>
</div></div>
</body></html>
